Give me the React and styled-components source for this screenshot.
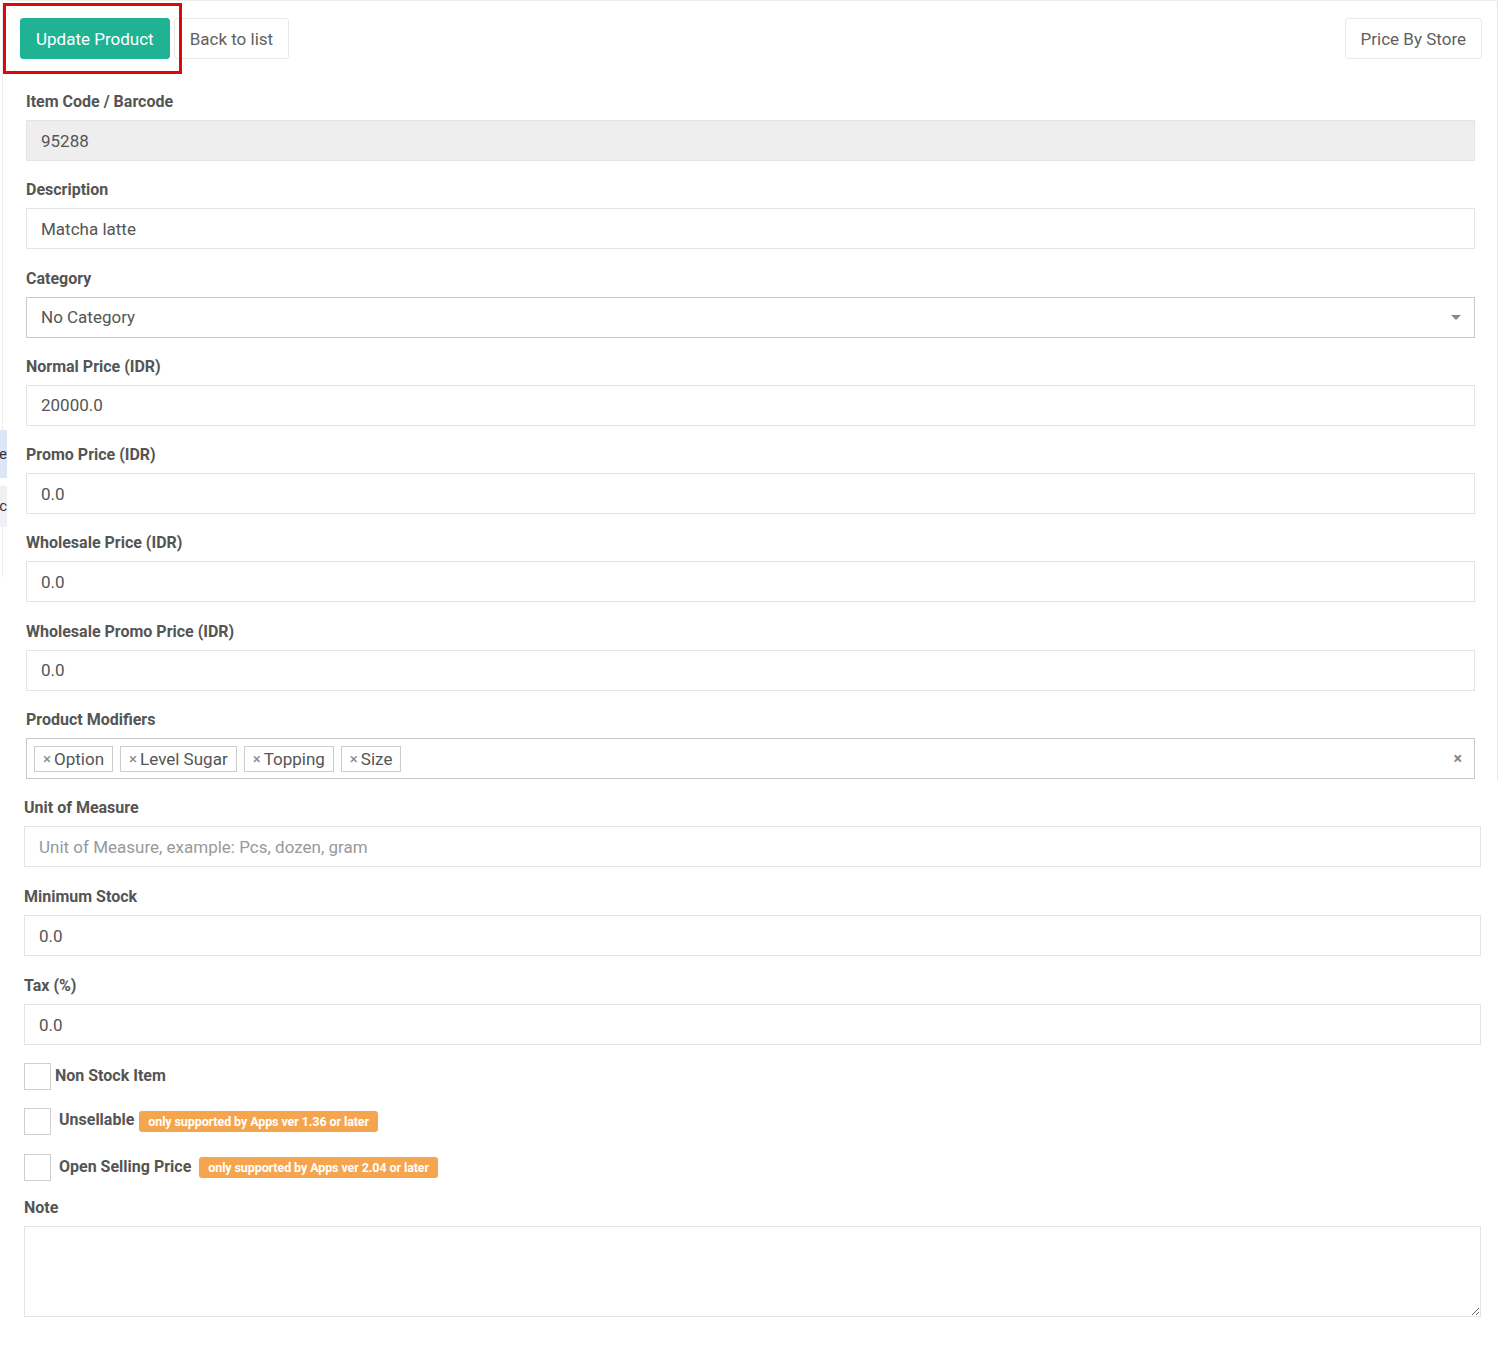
import React from 'react';
import styled, { createGlobalStyle } from 'styled-components';

const GlobalStyle = createGlobalStyle`
  html, body {
    margin: 0;
    padding: 0;
    background: #fff;
  }
  body {
    font-family: Roboto, "Liberation Sans", Arial, sans-serif;
    color: #555;
  }
  * { box-sizing: border-box; }
`;

const Page = styled.div`
  display: flex;
  width: 1500px;
  min-height: 1357px;
`;

// clipped edge of the side menu
const SideStrip = styled.div`
  width: 7px;
  flex-shrink: 0;
  overflow: hidden;
  display: flex;
  flex-direction: column;
`;

const SideRail = styled.div`
  width: 3px;
  height: ${(p) => p.h}px;
  border-right: 1px solid #ebebeb;
  flex-shrink: 0;
`;

const SideItem = styled.div`
  width: 7px;
  height: ${(p) => p.h}px;
  margin-bottom: ${(p) => p.mb || 0}px;
  background: ${(p) => (p.active ? '#dce6f8' : '#eef0f4')};
  display: flex;
  align-items: center;
  justify-content: flex-end;
  font-size: 15px;
  color: #333;
  line-height: 1;
  overflow: hidden;
  white-space: nowrap;
`;

const Content = styled.div`
  flex: 1;
  display: flex;
  flex-direction: column;
`;

const Card = styled.div`
  margin-right: 2px;
  border-top: 1px solid #ececec;
  border-right: 1px solid #e6e6e6;
  padding: 17px 15px 1px 13px;
`;

const Toolbar = styled.div`
  display: flex;
  justify-content: space-between;
  align-items: center;
  margin-bottom: 34px;
`;

const ButtonGroup = styled.div`
  display: flex;
  gap: 4px;
`;

const Highlighted = styled.div`
  position: relative;
`;

const Marker = styled.span`
  position: absolute;
  left: -17px;
  top: -15px;
  width: 179px;
  height: 71px;
  border: 3px solid #e1060a;
  pointer-events: none;
`;

const Button = styled.button`
  height: 41px;
  padding: 0 15px;
  font-family: Roboto, "Liberation Sans", Arial, sans-serif;
  font-size: 17px;
  border-radius: 3px;
  cursor: pointer;
  background: ${(p) => (p.primary ? '#1fb394' : '#fff')};
  color: ${(p) => (p.primary ? '#fff' : '#5f5f5f')};
  border: 1px solid ${(p) => (p.primary ? '#1fb394' : '#e8e8e8')};
`;

const Form = styled.div`
  padding: 0 7px 0 6px;
`;

const LowerForm = styled.div`
  padding: 19px 19px 40px 17px;
`;

const Field = styled.div`
  margin-bottom: ${(p) => (p.mb !== undefined ? p.mb : 20.3)}px;
`;

const Label = styled.label`
  display: block;
  font-size: 16px;
  font-weight: 700;
  line-height: 18px;
  color: #555;
  margin-bottom: 9px;
`;

const Input = styled.input`
  display: block;
  width: 100%;
  height: 41px;
  padding: 0 14px;
  border: 1px solid #e4e4e4;
  border-radius: 0;
  background: ${(p) => (p.readOnly ? '#eee' : '#fff')};
  font-family: Roboto, "Liberation Sans", Arial, sans-serif;
  font-size: 17px;
  color: #555;
  outline: none;
  &::placeholder {
    color: #999;
  }
`;

const SelectBox = styled.div`
  display: flex;
  align-items: center;
  justify-content: space-between;
  height: 41px;
  padding: 0 14px;
  border: 1px solid #c8c8c8;
  font-size: 17px;
  color: #555;
`;

const Caret = styled.span`
  width: 0;
  height: 0;
  margin-right: -1px;
  border-left: 5px solid transparent;
  border-right: 5px solid transparent;
  border-top: 5px solid #888;
`;

const TagBox = styled.div`
  display: flex;
  align-items: center;
  height: 41px;
  padding: 0 7px;
  border: 1px solid #c8c8c8;
  gap: 7px;
`;

const Tag = styled.span`
  display: flex;
  align-items: center;
  height: 26px;
  padding: 0 8px 0 8px;
  border: 1px solid #cdcdcd;
  font-size: 17px;
  color: #555;
`;

const TagRemove = styled.span`
  color: #888;
  font-size: 15px;
  margin-right: 3px;
`;

const ClearAll = styled.span`
  margin-left: auto;
  margin-right: 5px;
  color: #888;
  font-size: 16px;
  font-weight: 700;
`;

const CheckRow = styled.div`
  display: flex;
  align-items: center;
  gap: ${(p) => p.gap}px;
  margin-bottom: ${(p) => p.mb}px;
`;

const CheckBox = styled.span`
  width: 27px;
  height: 27px;
  border: 1px solid #cfcfcf;
  background: #fff;
  flex-shrink: 0;
`;

const CheckLabel = styled.span`
  font-size: 16px;
  font-weight: 700;
  color: #555;
  position: relative;
  top: ${(p) => p.shift || 0}px;
`;

const Badge = styled.span`
  display: inline-flex;
  align-items: center;
  height: 21px;
  padding: 0 9px;
  margin-left: ${(p) => p.ml || 0}px;
  border-radius: 3px;
  background: #f5a54e;
  color: #fff;
  font-size: 12.5px;
  font-weight: 700;
  letter-spacing: -0.1px;
`;

const TextArea = styled.textarea`
  display: block;
  width: 100%;
  height: 91px;
  border: 1px solid #e4e4e4;
  font-family: Roboto, "Liberation Sans", Arial, sans-serif;
  font-size: 17px;
  resize: vertical;
`;

const prices = [
  ['Normal Price (IDR)', '20000.0'],
  ['Promo Price (IDR)', '0.0'],
  ['Wholesale Price (IDR)', '0.0'],
  ['Wholesale Promo Price (IDR)', '0.0'],
];

const modifiers = ['Option', 'Level Sugar', 'Topping', 'Size'];

const App = () => (
  <>
    <GlobalStyle />
    <Page>
      <SideStrip>
        <SideRail h={430} />
        <SideItem active h={48} mb={8}>e</SideItem>
        <SideItem h={41}>c</SideItem>
        <SideRail h={50} />
      </SideStrip>
      <Content>
        <Card>
          <Toolbar>
            <ButtonGroup>
              <Highlighted>
                <Button primary>Update Product</Button>
                <Marker />
              </Highlighted>
              <Button>Back to list</Button>
            </ButtonGroup>
            <Button>Price By Store</Button>
          </Toolbar>
          <Form>
            <Field>
              <Label>Item Code / Barcode</Label>
              <Input readOnly value="95288" />
            </Field>
            <Field>
              <Label>Description</Label>
              <Input defaultValue="Matcha latte" />
            </Field>
            <Field>
              <Label>Category</Label>
              <SelectBox>
                No Category
                <Caret />
              </SelectBox>
            </Field>
            {prices.map(([label, value]) => (
              <Field key={label}>
                <Label>{label}</Label>
                <Input defaultValue={value} />
              </Field>
            ))}
            <Field mb={0}>
              <Label>Product Modifiers</Label>
              <TagBox>
                {modifiers.map((m) => (
                  <Tag key={m}>
                    <TagRemove>×</TagRemove>
                    {m}
                  </Tag>
                ))}
                <ClearAll>×</ClearAll>
              </TagBox>
            </Field>
          </Form>
        </Card>
        <LowerForm>
          <Field mb={21}>
            <Label>Unit of Measure</Label>
            <Input placeholder="Unit of Measure, example: Pcs, dozen, gram" />
          </Field>
          <Field mb={21}>
            <Label>Minimum Stock</Label>
            <Input defaultValue="0.0" />
          </Field>
          <Field mb={18}>
            <Label>Tax (%)</Label>
            <Input defaultValue="0.0" />
          </Field>
          <CheckRow gap={4} mb={18}>
            <CheckBox />
            <CheckLabel shift={-1}>Non Stock Item</CheckLabel>
          </CheckRow>
          <CheckRow gap={8} mb={19}>
            <CheckBox />
            <CheckLabel shift={-2}>Unsellable</CheckLabel>
            <Badge ml={-3}>only supported by Apps ver 1.36 or later</Badge>
          </CheckRow>
          <CheckRow gap={8} mb={18}>
            <CheckBox />
            <CheckLabel shift={-1}>Open Selling Price</CheckLabel>
            <Badge>only supported by Apps ver 2.04 or later</Badge>
          </CheckRow>
          <Label>Note</Label>
          <TextArea />
        </LowerForm>
      </Content>
    </Page>
  </>
);

export default App;
